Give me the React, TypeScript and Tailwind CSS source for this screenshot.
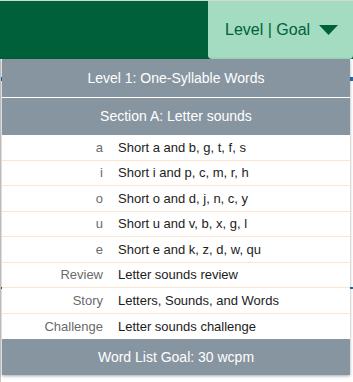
export default function App() {
  const rows = [
    { label: 'a', text: 'Short a and b, g, t, f, s' },
    { label: 'i', text: 'Short i and p, c, m, r, h' },
    { label: 'o', text: 'Short o and d, j, n, c, y' },
    { label: 'u', text: 'Short u and v, b, x, g, l' },
    { label: 'e', text: 'Short e and k, z, d, w, qu' },
    { label: 'Review', text: 'Letter sounds review' },
    { label: 'Story', text: 'Letters, Sounds, and Words' },
    { label: 'Challenge', text: 'Letter sounds challenge' },
  ];

  return (
    <div className="relative w-[353px] h-[382px] overflow-hidden bg-white font-['Liberation_Sans',Arial,sans-serif] border-t border-[#d6d6d6]">
      {/* page behind the menu */}
      <div className="absolute left-0 top-[76px] w-full h-[4px] bg-[#1f6fb5]" />
      <div className="absolute left-0 top-[286px] w-full h-[2px] bg-[#1f6fb5]" />
      <div className="absolute left-0 top-0 w-[1px] h-full bg-[#c8c8c8]" />

      {/* header */}
      <div className="relative flex justify-end h-[58px] bg-[#006039]">
        <button className="flex items-center gap-[9px] h-[58px] w-[145px] pl-[17px] rounded-b-[4px] bg-[#a3dcc1] text-[#006039] text-[16px]">
          <span>Level | Goal</span>
          <svg width="19" height="10" viewBox="0 0 19 10">
            <path d="M0 0 L19 0 L9.5 10 Z" fill="#006039" />
          </svg>
        </button>
      </div>

      {/* dropdown */}
      <div className="relative ml-[2px] w-[348px] bg-white shadow-[0_1px_3px_rgba(0,0,0,0.35)]">
        <div className="h-[39px] flex items-center justify-center bg-[#8795a1] text-white text-[14px] border-b border-white">
          Level 1: One-Syllable Words
        </div>
        <div className="h-[37px] flex items-center justify-center bg-[#8795a1] text-white text-[14px]">
          Section A: Letter sounds
        </div>
        {rows.map((row, i) => (
          <div
            key={i}
            className={`h-[25.5px] flex items-center text-[13px] ${i < rows.length - 1 ? 'border-b border-[#fbe7cf]' : ''}`}
          >
            <span className="w-[101px] text-right text-[#6a6a6a]">{row.label}</span>
            <span className="ml-[15px] text-[#1c1c1c]">{row.text}</span>
          </div>
        ))}
        <div className="h-[36px] flex items-center justify-center bg-[#8795a1] text-white text-[14px]">
          Word List Goal: 30 wcpm
        </div>
      </div>
    </div>
  );
}
